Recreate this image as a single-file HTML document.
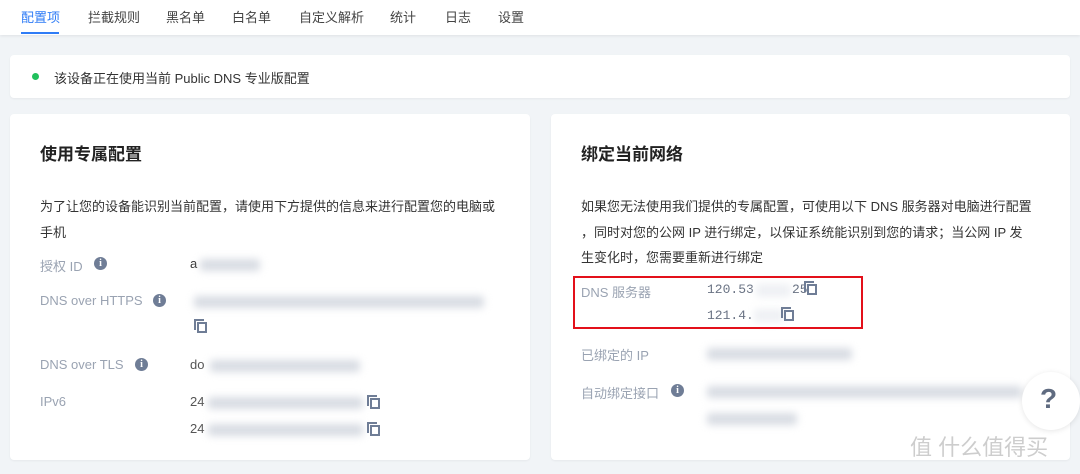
<!DOCTYPE html>
<html><head><meta charset="utf-8"><style>
*{margin:0;padding:0;box-sizing:border-box}
body{width:1080px;height:474px;overflow:hidden;background:#f1f4f7;font-family:"Liberation Sans","Noto Sans CJK SC",sans-serif;color:#333;position:relative}
.nav{position:absolute;left:0;top:0;width:1080px;height:35px;background:#fff;box-shadow:0 1px 3px rgba(0,0,0,.08)}
.nav span{position:absolute;top:7px;font-size:13px;color:#444}
.nav .a{color:#2f7cf6}
.ul{position:absolute;left:21px;top:32px;width:38px;height:2px;background:#2f7cf6}
.card{position:absolute;background:#fff;border-radius:4px;box-shadow:0 1px 2px rgba(0,0,0,.05)}
.t{position:absolute;font-size:13px;white-space:nowrap}
.lab{color:#9aa3b2}
.h{font-size:17px;font-weight:bold;color:#222}
.i{position:absolute;width:13px;height:13px;border-radius:50%;background:#6f7d96;color:#fff;font-size:10px;font-weight:bold;text-align:center;line-height:13px;font-family:"Liberation Serif",serif}
.b{position:absolute;background:#d8dce3;filter:blur(4px);border-radius:3px}
.cp{position:absolute;width:10px;height:11px;border:2px solid #6f7d96}
.cp:before{content:"";position:absolute;left:-5px;top:-5px;width:8px;height:9px;border-left:2px solid #6f7d96;border-top:2px solid #6f7d96}
.mono{font-family:"Liberation Mono",monospace;color:#6a7384}
</style></head><body>
<div class="nav">
<span class="a" style="left:21px">配置项</span><span style="left:88px">拦截规则</span><span style="left:166px">黑名单</span><span style="left:232px">白名单</span><span style="left:299px">自定义解析</span><span style="left:390px">统计</span><span style="left:445px">日志</span><span style="left:498px">设置</span>
<div class="ul"></div></div>
<div class="card" style="left:10px;top:55px;width:1060px;height:43px">
<div style="position:absolute;left:22px;top:18px;width:7px;height:7px;border-radius:50%;background:#21c05c"></div>
<div class="t" style="left:44px;top:13px;color:#333">该设备正在使用当前 Public DNS 专业版配置</div></div>
<div class="card" style="left:10px;top:114px;width:520px;height:346px">
<div class="t h" style="left:30px;top:26px">使用专属配置</div>
<div class="t" style="left:30px;top:82px">为了让您的设备能识别当前配置，请使用下方提供的信息来进行配置您的电脑或</div>
<div class="t" style="left:30px;top:108px">手机</div>
<div class="t lab" style="left:30px;top:142px">授权 ID</div><div class="i" style="left:84px;top:143px">i</div>
<div class="t" style="left:180px;top:142px">a</div><div class="b" style="left:190px;top:145px;width:60px;height:12px"></div>
<div class="t lab" style="left:30px;top:179px">DNS over HTTPS</div><div class="i" style="left:143px;top:180px">i</div>
<div class="b" style="left:184px;top:182px;width:290px;height:12px"></div>
<div class="cp" style="left:187px;top:208px"></div>
<div class="t lab" style="left:30px;top:243px">DNS over TLS</div><div class="i" style="left:125px;top:244px">i</div>
<div class="t" style="left:180px;top:243px;color:#555">do</div><div class="b" style="left:200px;top:246px;width:150px;height:12px"></div>
<div class="t lab" style="left:30px;top:280px">IPv6</div>
<div class="t" style="left:180px;top:280px;color:#555">24</div><div class="b" style="left:198px;top:283px;width:155px;height:12px"></div><div class="cp" style="left:360px;top:284px"></div>
<div class="t" style="left:180px;top:307px;color:#555">24</div><div class="b" style="left:198px;top:310px;width:155px;height:12px"></div><div class="cp" style="left:360px;top:311px"></div>
</div>
<div class="card" style="left:551px;top:114px;width:519px;height:346px">
<div class="t h" style="left:30px;top:26px">绑定当前网络</div>
<div class="t" style="left:30px;top:82px">如果您无法使用我们提供的专属配置，可使用以下 DNS 服务器对电脑进行配置</div>
<div class="t" style="left:30px;top:108px">，同时对您的公网 IP 进行绑定，以保证系统能识别到您的请求；当公网 IP 发</div>
<div class="t" style="left:30px;top:133px">生变化时，您需要重新进行绑定</div>
<div class="t lab" style="left:30px;top:168px">DNS 服务器</div>
<div class="t mono" style="left:156px;top:168px">120.53</div><div class="b" style="left:205px;top:170px;width:35px;height:13px;background:#eef0f4"></div><div class="t mono" style="left:241px;top:168px">25</div><div class="cp" style="left:256px;top:170px"></div>
<div class="t mono" style="left:156px;top:194px">121.4.</div><div class="b" style="left:203px;top:195px;width:30px;height:13px;background:#eef0f4"></div><div class="cp" style="left:233px;top:196px"></div>
<div style="position:absolute;left:22px;top:162px;width:290px;height:53px;border:2px solid #e3101a"></div>
<div class="t lab" style="left:30px;top:231px">已绑定的 IP</div><div class="b" style="left:156px;top:234px;width:145px;height:12px"></div>
<div class="t lab" style="left:30px;top:269px">自动绑定接口</div><div class="i" style="left:120px;top:270px">i</div>
<div class="b" style="left:156px;top:272px;width:315px;height:12px"></div><div class="b" style="left:156px;top:299px;width:90px;height:12px"></div>
</div>
<div style="position:absolute;left:1022px;top:372px;width:58px;height:58px;border-radius:50%;background:#fff;box-shadow:0 1px 6px rgba(0,0,0,.1)"></div>
<div class="t" style="left:1040px;top:383px;font-size:28px;font-weight:bold;color:#5f6b80">?</div>
<div class="t" style="left:910px;top:430px;font-size:22px;color:rgba(200,200,200,.9)">值 什么值得买</div>
</body></html>
